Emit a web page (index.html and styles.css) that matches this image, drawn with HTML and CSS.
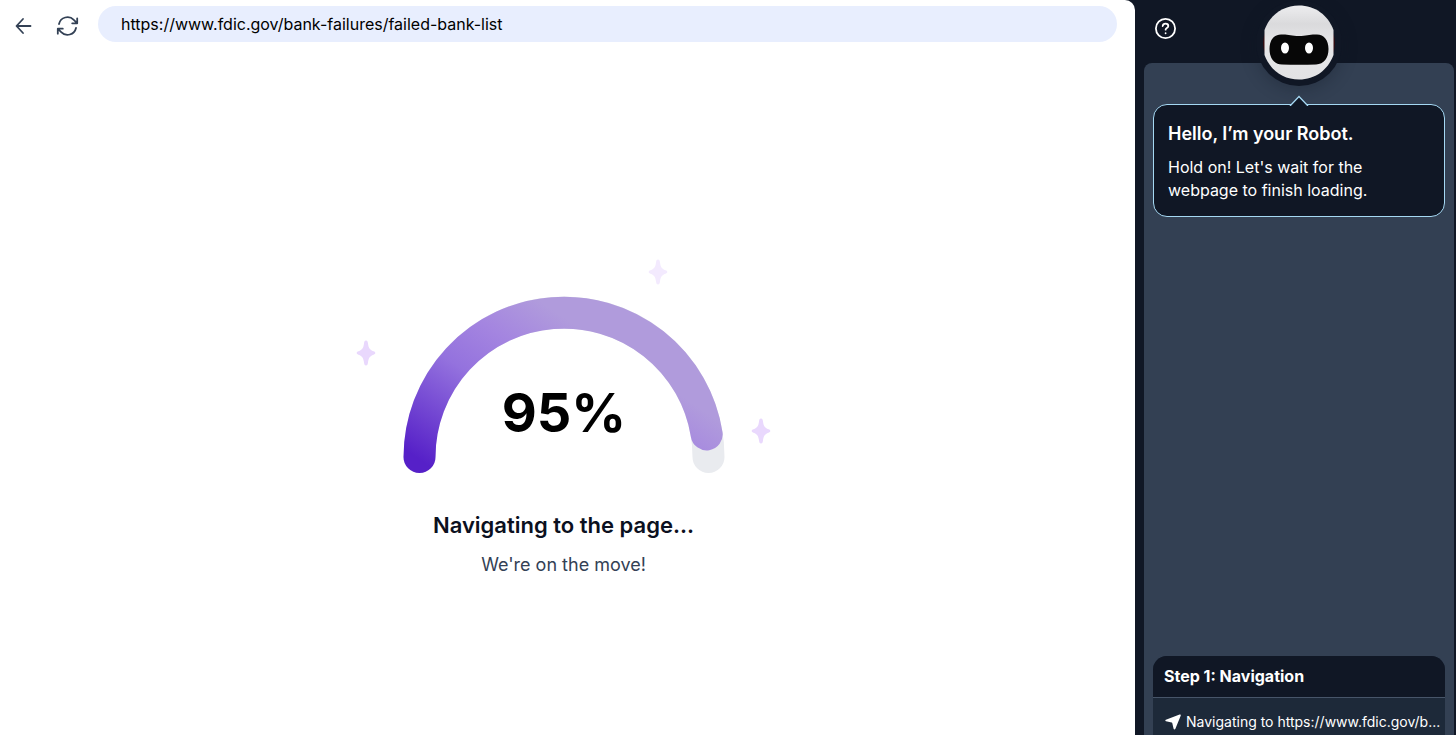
FILE: index.html
```html
<!DOCTYPE html>
<html lang="en">
<head>
    <meta charset="UTF-8">
    <meta name="viewport" content="width=device-width, initial-scale=1.0">
    <title>Robot Studio</title>
    <link rel="stylesheet" href="styles.css">
</head>
<body>
    <div class="container">
        <main class="browser">
            <div class="toolbar">
                <button class="icon-button" type="button" aria-label="Back">
                    <svg width="24" height="24" viewBox="0 0 24 24" fill="none" stroke="currentColor" stroke-width="1.8" stroke-linecap="round" stroke-linejoin="round">
                        <path d="M18.500 12H5M11 5L4.500 12l6.500 7"/>
                    </svg>
                </button>
                <button class="icon-button" type="button" aria-label="Reload">
                    <svg width="24" height="24" viewBox="0 0 24 24" fill="none" stroke="currentColor" stroke-width="1.8" stroke-linecap="round" stroke-linejoin="round">
                        <path d="M16.200 9.300h5V4.300M21 9.100l-3.200-3.200A8.700 8.700 0 0 0 3 10M6.800 14.700h-5v5M2 14.900l3.200 3.200A8.700 8.700 0 0 0 20 14"/>
                    </svg>
                </button>
                <input class="url-input" type="text" aria-label="Address" value="https://www.fdic.gov/bank-failures/failed-bank-list">
            </div>
            <div class="loading">
                <svg class="gauge" viewBox="0 0 420 222" role="img" aria-label="Loading progress">
                    <defs>
                        <linearGradient id="progress" gradientUnits="userSpaceOnUse" x1="75" y1="210" x2="185" y2="45">
                            <stop offset="0" stop-color="#5620c8"/>
                            <stop offset="0.5" stop-color="#9472de"/>
                            <stop offset="0.75" stop-color="#a485e0"/>
                            <stop offset="1" stop-color="#b09bdc"/>
                        </linearGradient>
                        <path id="star" d="M0-12.5C1.4-12.5 1.7-11.5 2-9.5 2.6-5 3.6-3.2 7.5-1.7 8.8-1.2 9.3-.8 9.3 0S8.8 1.2 7.5 1.7C3.6 3.2 2.6 5 2 9.5 1.7 11.5 1.4 12.5 0 12.5S-1.7 11.5-2 9.5C-2.6 5-3.6 3.2-7.5 1.7-8.8 1.2-9.3.8-9.3 0S-8.8-1.2-7.5-1.7C-3.6-3.2-2.6-5-2-9.5-1.7-11.5-1.4-12.5 0-12.5Z"/>
                    </defs>
                    <path d="M65.5 201A144.5 144.5 0 0 1 354.5 201" fill="none" stroke="#e9ebef" stroke-width="32" stroke-linecap="round"/>
                    <path d="M65.5 201A144.5 144.5 0 0 1 352.7 178.4" fill="none" stroke="url(#progress)" stroke-width="32" stroke-linecap="round"/>
                    <use href="#star" x="12" y="97" fill="#e9d8fd"/>
                    <use href="#star" x="304" y="16" fill="#f3eafe"/>
                    <use href="#star" x="407" y="175" fill="#e9d8fd"/>
                    <text class="gauge-value" x="210" y="176" text-anchor="middle">95%</text>
                </svg>
                <h1>Navigating to the page...</h1>
                <p>We're on the move!</p>
            </div>
        </main>

        <aside class="sidebar">
            <div class="sidebar-header">
                <button class="icon-button help-button" type="button" aria-label="Help">
                    <svg width="24" height="24" viewBox="0 0 24 24" fill="none" stroke="currentColor" stroke-width="1.8" stroke-linecap="round" stroke-linejoin="round">
                        <circle cx="11.500" cy="12.500" r="9.600"/>
                        <path d="M8.700 10c.2-1.500 1.300-2.400 2.800-2.400s2.800 1 2.800 2.400c0 2.100-2.700 2-2.700 3.700"/>
                        <path d="M11.600 17.200v.1"/>
                    </svg>
                </button>
                <div class="avatar">
                    <svg width="76" height="76" viewBox="0 0 76 76">
                        <defs>
                            <linearGradient id="head" x1="0" y1="0" x2="0" y2="1">
                                <stop offset="0" stop-color="#ededef"/>
                                <stop offset="0.25" stop-color="#dadadc"/>
                                <stop offset="0.5" stop-color="#e6e6e8"/>
                                <stop offset="1" stop-color="#e2e2e4"/>
                            </linearGradient>
                        </defs>
                        <path d="M4 28Q0 38 4 48ZM72 28Q76 38 72 48Z" fill="#350c10"/>
                        <path d="M38 0.500C54 0.500 67 10 72.500 25V50C67 65 54 74.500 38 74.500S9 65 3.500 50V25C9 10 22 0.500 38 0.500Z" fill="url(#head)"/>
                        <path d="M20 29.500C27 29 30 31 38 31S49 29 56 29.500C63 29.500 67.500 35 67.500 44S63 59 55 59.500Q38 60 21 59.500C13 59 8.500 53 8.500 44S13 29.500 20 29.500Z" fill="#070707"/>
                        <ellipse cx="24" cy="43" rx="4" ry="5.500" fill="#fff"/>
                        <ellipse cx="48" cy="43" rx="4" ry="5.500" fill="#fff"/>
                    </svg>
                </div>
            </div>
            <div class="chat-panel">
                <div class="message">
                    <svg class="message-arrow" width="20" height="11" viewBox="0 0 20 11">
                        <path d="M1 11L10 1.500L19 11" fill="#101725" stroke="#a5d8f3" stroke-width="1.300"/>
                    </svg>
                    <h2>Hello, I’m your Robot.</h2>
                    <p>Hold on! Let's wait for the webpage to finish loading.</p>
                </div>
                <div class="step">
                    <h3>Step 1: Navigation</h3>
                    <div class="step-action">
                        <svg width="16" height="16" viewBox="0 0 16 16" fill="currentColor">
                            <path d="M14.600.600C15.400.300 16 .900 15.700 1.700L10.400 14.800C10 15.700 8.800 15.600 8.600 14.700L7.300 9.200C7.200 8.900 7 8.700 6.700 8.600L1 7.300C.200 7.100.100 6 .900 5.700Z"/>
                        </svg>
                        <span>Navigating to https://www.fdic.gov/b...</span>
                    </div>
                </div>
            </div>
        </aside>
    </div>
</body>
</html>
```
FILE: styles.css
```css
* {
    box-sizing: border-box;
}
body {
    margin: 0;
    background: #101725;
    font-family: Inter, "Liberation Sans", sans-serif;
}
h1, h2, h3, p {
    margin: 0;
}
.container {
    display: flex;
    height: 100vh;
    overflow: hidden;
}
.browser {
    flex: 1;
    min-width: 0;
    display: flex;
    flex-direction: column;
    background: white;
    border-top-right-radius: 10px;
}
.toolbar {
    display: flex;
    align-items: center;
    gap: 20px;
    padding: 6px 18px 0 12px;
}
.icon-button {
    display: flex;
    padding: 0;
    border: none;
    background: none;
    color: #334155;
    cursor: pointer;
}
.toolbar .icon-button {
    padding-top: 4px;
}
.url-input {
    flex: 1;
    min-width: 0;
    height: 36px;
    margin-left: -2px;
    padding: 0 23px;
    border: none;
    border-radius: 18px;
    background: #e8eefe;
    color: black;
    font-family: inherit;
    font-size: 16px;
}
.loading {
    flex: 1;
    display: flex;
    flex-direction: column;
    align-items: center;
    justify-content: center;
    padding: 56px 8px 0 0;
    text-align: center;
}
.gauge {
    width: 420px;
    max-width: 100%;
    overflow: visible;
}
.gauge-value {
    font-size: 54px;
    font-weight: 700;
}
.loading h1 {
    margin-top: 31px;
    color: #0b1020;
    font-size: 22px;
    font-weight: 600;
    line-height: 32px;
}
.loading p {
    margin-top: 12px;
    color: #334155;
    font-size: 18px;
    line-height: 24px;
}
.sidebar {
    width: 321px;
    display: flex;
    flex-direction: column;
    padding: 0 2px 0 9px;
}
.sidebar-header {
    position: relative;
    height: 63px;
    padding: 16px 10px 0;
}
.help-button {
    color: white;
}
/* robot head overlaps the top edge of the panel */
.avatar {
    position: absolute;
    top: 0;
    left: 50%;
    width: 86px;
    height: 86px;
    margin-left: -43px;
    padding: 5px;
    border-radius: 50%;
    background: #101725;
    box-shadow: 0 4px 16px rgba(16, 23, 37, 0.3);
}
.chat-panel {
    flex: 1;
    min-height: 0;
    display: flex;
    flex-direction: column;
    justify-content: space-between;
    padding: 41px 9px 0;
    border-radius: 8px 8px 0 0;
    background: #334053;
    color: white;
}
.message {
    position: relative;
    padding: 17px 14px 14px;
    border: 1px solid #a5d8f3;
    border-radius: 14px;
    background: #101725;
}
.message-arrow {
    position: absolute;
    top: -10px;
    left: 50%;
    margin-left: -10px;
}
.message h2 {
    font-size: 18px;
    font-weight: 600;
    line-height: 24px;
}
.message p {
    margin-top: 10px;
    font-size: 16px;
    line-height: 23px;
}
.step {
    overflow: hidden;
    border-radius: 14px 14px 0 0;
    background: #1d2939;
}
.step h3 {
    padding: 8px 11px;
    border-bottom: 1px solid #475569;
    background: #101725;
    font-size: 16px;
    font-weight: 700;
    line-height: 25px;
}
.step-action {
    display: flex;
    align-items: center;
    gap: 5px;
    padding: 14px 4px 3px 12px;
    font-size: 14px;
    line-height: 20px;
}
.step-action svg {
    flex: none;
}
.step-action span {
    white-space: nowrap;
}
```
